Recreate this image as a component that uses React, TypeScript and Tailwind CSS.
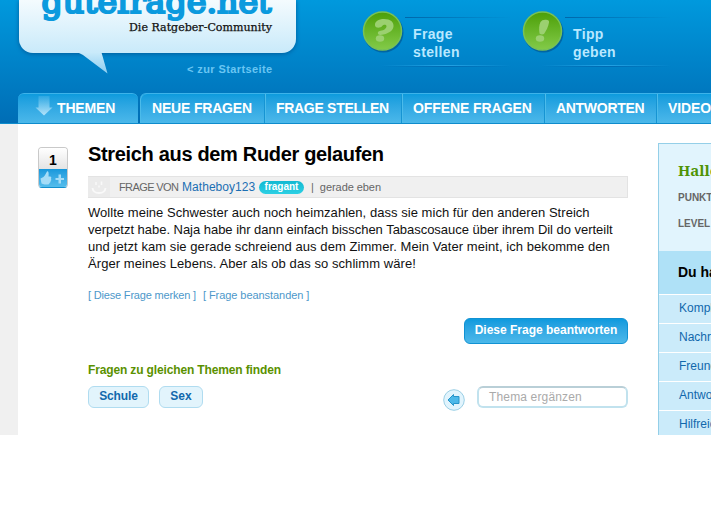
import React from "react";

const navItems = [
  { label: "NEUE FRAGEN", box: "w-[124px] pl-3 rounded-tl-md tracking-[-0.18px]" },
  { label: "FRAGE STELLEN", box: "w-[137px] pl-[11px] border-l tracking-[-0.3px]" },
  { label: "OFFENE FRAGEN", box: "w-[143px] pl-[11px] border-l tracking-[-0.08px]" },
  { label: "ANTWORTEN", box: "w-[112px] pl-[11px] border-l tracking-[-0.3px]" },
  { label: "VIDEOS", box: "w-[100px] pl-[11px] border-l tracking-[-0.1px]" },
];

const question = [
  { text: "Wollte meine Schwester auch noch heimzahlen, dass sie mich für den anderen Streich", fit: "tracking-[0.04px]" },
  { text: "verpetzt habe. Naja habe ihr dann einfach bisschen Tabascosauce über ihrem Dil do verteilt", fit: "tracking-[-0.03px]" },
  { text: "und jetzt kam sie gerade schreiend aus dem Zimmer. Mein Vater meint, ich bekomme den", fit: "tracking-[0.065px]" },
  { text: "Ärger meines Lebens. Aber als ob das so schlimm wäre!", fit: "tracking-[0.065px]" },
];

const links = ["Komplimente", "Nachrichten", "Freunde", "Antworten", "Hilfreiche"];

function Logo() {
  return (
    <div className="relative ml-[19px] h-[53px] w-[277px] shrink-0 rounded-b-[14px] bg-gradient-to-b from-[#f4fbfe] to-[#c9eafa] shadow-[0_1px_4px_#005c9c]">
      <svg className="absolute left-0 top-0" width="277" height="76" viewBox="0 0 277 76">
        <defs>
          <linearGradient id="tail" x1="0" y1="0" x2="0" y2="1">
            <stop offset="0" stopColor="#c9eafa" />
            <stop offset="1" stopColor="#8bcdf0" />
          </linearGradient>
        </defs>
        <path d="M59 52.500L64 55L88.500 73.500L82.500 52.500Z" fill="url(#tail)" />
        <text x="22.500" y="12.500" fontSize="31" fontFamily="'DejaVu Serif', serif" fill="#0b9ade" stroke="#0b9ade" strokeWidth="2.200" textLength="230" lengthAdjust="spacingAndGlyphs">gutefrage.net</text>
        <text x="110" y="31" fontSize="11" fontFamily="'DejaVu Serif', serif" fill="#111" stroke="#111" strokeWidth=".25" textLength="143" lengthAdjust="spacingAndGlyphs">Die Ratgeber-Community</text>
      </svg>
    </div>
  );
}

function Badge({ mark }: { mark: "?" | "!" }) {
  return (
    <svg className="shrink-0" width="44" height="44" viewBox="0 0 44 44">
      <defs>
        <linearGradient id="green" x1="0" y1="0" x2="0" y2="1">
          <stop offset="0" stopColor="#4c9f08" />
          <stop offset="1" stopColor="#83cb49" />
        </linearGradient>
      </defs>
      <circle cx="22.500" cy="22.500" r="20" fill="#00437a" opacity=".5" />
      <circle cx="21.500" cy="21" r="19" fill="url(#green)" stroke="#79c257" strokeWidth="1.500" />
      {mark === "?" ? (
        <g fill="#9bd070">
          <path d="M14 15.500C13.500 11.500 17.500 9 23 9C29.500 9 33 12 32.500 16.500C32 20.500 28 23 23.500 24.200Q18.500 25.500 17.500 24.500C16 22.500 17.500 21 19.500 20.800C23.500 20.200 25 18.500 25.500 16.500C25.700 15 24 14.500 22.500 15C21 15.500 21.500 16.500 19.500 17.200C17.500 18 14.500 17.800 14 15.500Z" />
          <ellipse cx="19" cy="28.500" rx="4.200" ry="3.300" />
        </g>
      ) : (
        <g fill="#9bd070">
          <path d="M19.500 12Q21 9.500 25 9.800Q28.500 10 28 12.500C27.500 16.500 25 21 23 24Q20.500 25 18.500 23.500C17.800 19 18 15 19.500 12Z" />
          <ellipse cx="19" cy="28.500" rx="4.200" ry="3.300" />
        </g>
      )}
    </svg>
  );
}

function Action({ mark, top, bottom }: { mark: "?" | "!"; top: string; bottom: string }) {
  return (
    <div className="flex w-[160px] items-start pt-[10px]">
      <Badge mark={mark} />
      <div className="mt-[7px] -ml-6 flex w-[130px] flex-col">
        <div className="ml-6 h-px bg-gradient-to-r from-[#0067aa] to-transparent" />
        <div className="h-px" />
        <div className="ml-[32px] flex h-[46px] flex-col pt-[6px] text-[14px] leading-[18px] font-bold tracking-[0.35px] text-[#b9e8ff]">
          <span>{top}</span>
          <span>{bottom}</span>
        </div>
        <div className="h-px bg-gradient-to-r from-transparent via-[#24a2e3] to-transparent" />
        <div className="h-px bg-gradient-to-r from-transparent via-[#006bb2] to-transparent" />
      </div>
    </div>
  );
}

function Header() {
  return (
    <header className="flex h-[124px] flex-col bg-gradient-to-b from-[#0099dd] to-[#006db5]">
      <div className="flex h-[93px]">
        <div className="flex w-[361px] flex-col">
          <Logo />
          <a className="mt-[8px] pl-[187px] text-[11px] leading-[16px] font-bold tracking-[0.4px] whitespace-nowrap text-[#69c6f3]">&lt; zur Startseite</a>
        </div>
        <Action mark="?" top="Frage" bottom="stellen" />
        <Action mark="!" top="Tipp" bottom="geben" />
      </div>
      <nav className="flex h-[31px] border-b border-[#0e8ccc] pl-[18px] text-[14px] font-bold text-white">
        <div className="flex w-[120px] items-center rounded-t-md border-t border-[#3cb3ea] bg-gradient-to-b from-[#0b9bdd] to-[#4bb8ea] pl-[17px]">
          <svg className="mb-[5px] shrink-0" width="18" height="20" viewBox="0 0 18 20">
            <defs>
              <linearGradient id="arrow" x1="0" y1="0" x2="0" y2="1">
                <stop offset="0" stopColor="#8bd2f4" stopOpacity=".2" />
                <stop offset="1" stopColor="#b5e4fa" />
              </linearGradient>
            </defs>
            <path d="M3.500 0H14.500V11.500H17.500L9 19.500L.5 11.500H3.500Z" fill="url(#arrow)" />
          </svg>
          <span className="ml-[4px] tracking-[-0.15px]">THEMEN</span>
        </div>
        <div className="ml-[2px] flex min-w-0 flex-1 overflow-hidden rounded-tl-md border-t border-[#3cb3ea] bg-gradient-to-b from-[#0b9bdd] to-[#4bb8ea]">
          {navItems.map((n) => (
            <div key={n.label} className={`flex shrink-0 items-center border-[#1694d3] whitespace-nowrap shadow-[inset_1px_0_0_#4bbbea] ${n.box}`}>
              {n.label}
            </div>
          ))}
        </div>
      </nav>
    </header>
  );
}

function Vote() {
  return (
    <div className="mt-[23px] ml-[20px] flex h-[41px] w-[30px] shrink-0 flex-col overflow-hidden rounded-[4px] border border-[#c9c9c9] border-b-[#128fce]">
      <div className="flex h-[21px] items-center justify-center bg-gradient-to-b from-white to-[#e4e4e4] pt-[3px] text-[14px] font-bold text-black">1</div>
      <div className="-mx-px flex flex-1 items-center bg-gradient-to-b from-[#1598dc] to-[#54bdec] pl-px">
        <svg width="29" height="18" viewBox="0 0 29 18" fill="#a4dcf7">
          <path d="M1.500 9.500L4.500 8C6.500 6 7 4 8 2.500C9.500 1.500 10 4 9.500 7.500H11.500Q13 8.300 12 9.800Q12.800 11 11.700 12Q11.800 13.500 10.500 14Q10.500 15.500 8.500 15.500H5.500L2.500 14.500Z" />
          <path d="M19.500 5.500H22V9H25V11H22V14.500H19.500V11H16.500V9H19.500Z" />
        </svg>
      </div>
    </div>
  );
}

function Question() {
  return (
    <main className="ml-[20px] flex w-[540px] shrink-0 flex-col pt-[18px]">
      <h1 className="h-[24px] text-[20px] leading-[24px] font-bold tracking-[-0.33px] whitespace-nowrap text-black">Streich aus dem Ruder gelaufen</h1>
      <div className="mt-[10px] flex h-[22px] items-center border border-[#e3e3e3] border-l-0 bg-[#f0f0f0] text-[11px] whitespace-nowrap text-[#666]">
        <svg className="shrink-0" width="22" height="20" viewBox="0 0 22 20" fill="none" stroke="#f9f9f9" strokeWidth="1.800">
          <rect width="22" height="20" fill="#ebebeb" stroke="none" />
          <path d="M4.500 11Q5 16 11 16Q17 16 17.500 11" />
          <path d="M8 5V8M13.500 4.500V8M11 8.500V10.500" strokeWidth="1.500" />
        </svg>
        <span className="ml-[9px] w-[63px] tracking-[-0.6px]">FRAGE VON</span>
        <a className="w-[77px] text-[12px] tracking-[0.05px] text-[#1b6fb3]">Matheboy123</a>
        <span className="flex h-[13px] w-[45px] shrink-0 items-center justify-center rounded-full bg-gradient-to-b from-[#10b9d2] to-[#2cd0e4] pb-px text-[10px] font-bold text-white">fragant</span>
        <span className="ml-[7px]">|</span>
        <span className="ml-[6px] tracking-[-0.06px]">gerade eben</span>
      </div>
      <div className="mt-[6px] flex flex-col text-[13px] leading-[17px] whitespace-nowrap text-[#111]">
        {question.map((l) => (
          <p key={l.text} className={l.fit}>{l.text}</p>
        ))}
      </div>
      <div className="mt-[16px] flex h-[14px] gap-[7px] text-[11px] leading-[14px] text-[#4d98ca]">
        <a className="tracking-[-0.18px]">[ Diese Frage merken ]</a>
        <a className="tracking-[-0.06px]">[ Frage beanstanden ]</a>
      </div>
      <button className="mt-[16px] flex h-[26px] w-[164px] items-center justify-center self-end rounded-md border border-[#1192d3] bg-gradient-to-b from-[#0c9ade] to-[#4bb8ea] pb-[2px] text-[12px] font-bold whitespace-nowrap text-white">Diese Frage beantworten</button>
      <h2 className="mt-[18px] text-[12px] leading-[16px] font-bold tracking-[-0.14px] text-[#5a9100]">Fragen zu gleichen Themen finden</h2>
      <div className="mt-[8px] flex h-[25px] items-start text-[12px] font-bold text-[#1168ac]">
        <a className="flex h-[22px] w-[61px] items-center justify-center rounded-md border border-[#b0dcf0] bg-[#e2f4fc] pb-[2px] tracking-[-0.1px]">Schule</a>
        <a className="ml-[10px] flex h-[22px] w-[44px] items-center justify-center rounded-md border border-[#b0dcf0] bg-[#e2f4fc] pb-[2px]">Sex</a>
        <svg className="mt-[3px] ml-auto" width="22" height="22" viewBox="0 0 22 22">
          <circle cx="11" cy="11" r="10.300" fill="#e1f4fd" stroke="#9bcfe5" />
          <path d="M5 11L10.500 5.500V7.500H16V14.500H10.500V16.500Z" fill="#4bb8e9" stroke="#2694c9" />
        </svg>
        <div className="ml-[12px] flex h-[22px] w-[151px] items-center rounded-md border-2 border-[#c1e2ee] border-t-[#b9cfd7] bg-white pb-px pl-[10px] text-[12px] font-normal tracking-[0.15px] text-[#aaa]">Thema ergänzen</div>
      </div>
    </main>
  );
}

function Sidebar() {
  return (
    <aside className="mt-[19px] ml-[30px] flex min-w-0 flex-1 flex-col overflow-hidden border-t border-l border-[#94cfe8] bg-[#e1f4fd] whitespace-nowrap">
      <div className="flex h-[107px] shrink-0 flex-col pl-[19px]">
        <h3 className="mt-[15px] font-['Noto_Serif','DejaVu_Serif',serif] text-[15px] leading-[22px] font-bold text-[#4f9305]">Hallo</h3>
        <span className="mt-[10px] text-[10px] leading-[14px] font-bold text-[#666]">PUNKTE</span>
        <span className="mt-[12px] text-[10px] leading-[14px] font-bold text-[#666]">LEVEL</span>
      </div>
      <div className="flex h-[43px] shrink-0 items-center bg-[#afe1f7] pl-[19px] text-[14px] font-bold text-black">Du hast</div>
      {links.map((l) => (
        <a key={l} className="flex h-[29px] shrink-0 items-center border-t border-white bg-[#cbebfa] pb-[2px] pl-[20px] text-[12px] text-[#1168ac]">{l}</a>
      ))}
    </aside>
  );
}

export default function App() {
  return (
    <div className="h-[512px] w-[711px] overflow-hidden bg-white font-['Liberation_Sans',Arial,sans-serif]">
      <Header />
      <div className="flex h-[311px] overflow-hidden">
        <div className="w-[18px] shrink-0 bg-[#f0f0f0]" />
        <Vote />
        <Question />
        <Sidebar />
      </div>
    </div>
  );
}
